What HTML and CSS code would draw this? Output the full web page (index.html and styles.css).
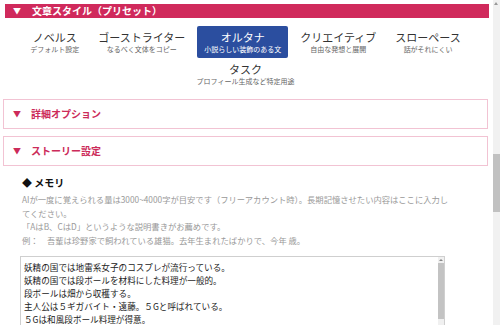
FILE: index.html
```html
<!DOCTYPE html>
<html lang="ja">
<head>
    <meta charset="UTF-8">
    <title>文章スタイル</title>
    <link rel="stylesheet" href="styles.css">
</head>
<body>
    <div class="page">
        <div class="content">
            <!-- 文章スタイル -->
            <div class="section-bar">
                <span class="tri">▼</span>文章スタイル（プリセット）
            </div>
            <div class="presets">
                <div class="preset">
                    <div class="preset-name">ノベルス</div>
                    <div class="preset-sub">デフォルト設定</div>
                </div>
                <div class="preset">
                    <div class="preset-name">ゴーストライター</div>
                    <div class="preset-sub">なるべく文体をコピー</div>
                </div>
                <div class="preset active">
                    <div class="preset-name">オルタナ</div>
                    <div class="preset-sub">小説らしい装飾のある文</div>
                </div>
                <div class="preset">
                    <div class="preset-name">クリエイティブ</div>
                    <div class="preset-sub">自由な発想と展開</div>
                </div>
                <div class="preset">
                    <div class="preset-name">スローペース</div>
                    <div class="preset-sub">話がそれにくい</div>
                </div>
                <div class="preset">
                    <div class="preset-name">タスク</div>
                    <div class="preset-sub">プロフィール生成など特定用途</div>
                </div>
            </div>

            <!-- 折りたたみ -->
            <div class="fold">
                <span class="tri">▼</span>詳細オプション
            </div>
            <div class="fold">
                <span class="tri">▼</span>ストーリー設定
            </div>

            <!-- メモリ -->
            <div class="memo">
                <h4>◆ メモリ</h4>
                <p class="note">
                    AIが一度に覚えられる量は3000~4000字が目安です（フリーアカウント時）。長期記憶させたい内容はここに入力してください。<br>
                    「AはB、CはD」というような説明書きがお薦めです。<br>
                    例：　吾輩は珍野家で飼われている雄猫。去年生まれたばかりで、今年 歳。
                </p>
                <div class="memo-box">
                    <textarea class="memo-text">妖精の国では地雷系女子のコスプレが流行っている。
妖精の国では段ボールを材料にした料理が一般的。
段ボールは畑から収穫する。
主人公は５ギガバイト・遠藤。５Gと呼ばれている。
５Gは和風段ボール料理が得意。
遠藤の相棒は地雷系妖精のミクル。
ミクルは段ボールが苦手。</textarea>
                    <div class="mini-scroll">
                        <div class="mini-arrow"></div>
                        <div class="mini-thumb"></div>
                    </div>
                </div>
            </div>
        </div>

        <!-- ページのスクロールバー -->
        <div class="scrollbar">
            <div class="scroll-arrow"></div>
            <div class="scroll-thumb"></div>
        </div>
    </div>
</body>
</html>
```

FILE: styles.css
```css
* {
    margin: 0;
    padding: 0;
    box-sizing: border-box;
    font-family: 'Noto Sans CJK JP', 'Noto Sans', sans-serif;
}

body {
    background: #fff;
    color: #333;
    overflow: hidden;
}

.page {
    display: flex;
    height: 325px;
}

.content {
    flex: 1;
}

/* 文章スタイル */
.section-bar {
    margin: 4px 4px 0 5px;
    height: 14px;
    background: #d02a5c;
    color: #fff;
    font-size: 10px;
    font-weight: bold;
    line-height: 14px;
    padding-left: 8px;
    display: flex;
}

.tri {
    font-size: 8px;
    width: 19px;
}

.presets {
    display: flex;
    flex-wrap: wrap;
    justify-content: center;
    column-gap: 5px;
    margin: 8px 6px 9px 4px;
}

.preset {
    padding: 4px 7px;
    text-align: center;
    border-radius: 2px;
}

.preset-name {
    font-size: 11px;
    line-height: 14px;
    color: #333;
}

.preset-sub {
    font-size: 7px;
    line-height: 10px;
    color: #666;
}

.preset.active {
    background: #2b4e9f;
}

.preset.active .preset-name,
.preset.active .preset-sub {
    color: #fff;
}

/* 折りたたみ */
.fold {
    margin: 0 5px 7px 3px;
    height: 30px;
    border: 1px solid #f2c3d3;
    color: #cc2b5a;
    font-size: 10px;
    font-weight: bold;
    line-height: 28px;
    padding-left: 9px;
    display: flex;
}

.fold .tri {
    width: 18px;
}

/* メモリ */
.memo {
    padding: 3px 0 0 20px;
}

.memo h4 {
    font-size: 10px;
    line-height: 14px;
    color: #111;
    padding-left: 2px;
}

.note {
    margin: 3px 0 9px 2px;
    width: 428px;
    font-size: 8.3px;
    line-height: 13.5px;
    color: #999;
}

.memo-box {
    display: flex;
    width: 425px;
    height: 90px;
    border: 1px solid #cfcfcf;
}

.memo-text {
    flex: 1;
    border: none;
    resize: none;
    overflow: hidden;
    padding: 4px 3px;
    font-size: 8.6px;
    line-height: 13px;
    color: #222;
    outline: none;
}

.mini-scroll {
    width: 6px;
    background: #f0f0f0;
}

.mini-arrow {
    height: 6px;
    position: relative;
}

.mini-arrow::after {
    content: '';
    position: absolute;
    left: 1px;
    top: 2px;
    border-left: 2px solid transparent;
    border-right: 2px solid transparent;
    border-bottom: 2px solid #888;
}

.mini-thumb {
    height: 56px;
    background: #c3c3c3;
}

/* ページのスクロールバー */
.scrollbar {
    width: 7px;
    background: #f1f1f1;
}

.scroll-arrow {
    height: 7px;
    position: relative;
}

.scroll-arrow::after {
    content: '';
    position: absolute;
    left: 1px;
    top: 2px;
    border-left: 2.5px solid transparent;
    border-right: 2.5px solid transparent;
    border-bottom: 3px solid #999;
}

.scroll-thumb {
    margin-top: 147px;
    height: 58px;
    background: #c1c1c1;
}
```
